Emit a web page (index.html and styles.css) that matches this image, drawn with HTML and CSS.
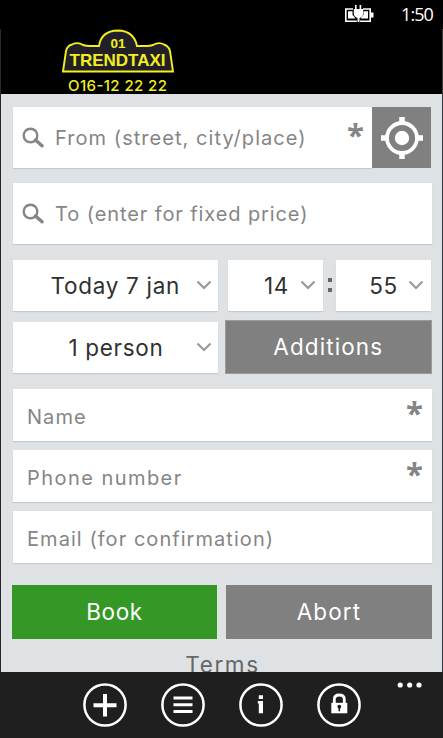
FILE: index.html
```html
<!DOCTYPE html>
<html lang="en">
<head>
<meta charset="utf-8">
<title>Trendtaxi</title>
<link rel="stylesheet" href="styles.css">
</head>
<body>
<div class="phone">
  <div class="status">
    <svg class="battery" width="31" height="19" viewBox="0 0 31 19">
      <path d="M9 5H1.8v12.2h11M19 5h7.2v12.2H16" fill="none" stroke="#fff" stroke-width="1.6"/>
      <path d="M4 7.200h4.500v3.500l3 3.800H4zM24 7.200h-4.500v3.500l-3 3.800H24zM27 8.500h2.500v5H27z" fill="#fff"/>
      <path d="M11 1h1.600v4h3V1h1.600v4h2v4.500q0 3-3.700 4.500v4h-2v-4q-3.700-1.500-3.700-4.500V5H11z" fill="#fff"/>
    </svg>
    <span class="clock">1:50</span>
  </div>
  <header class="brand">
    <svg class="logo" width="120" height="65" viewBox="0 0 120 65">
      <path d="M5 42.500L8 22q1-5 6-6.500 6-3 11 .5 3 1 7 1h9q2-15 19-15.500Q76 2 79 17h10q3 0 6-1 6-3.500 11-.5 5 2 6 6.500l3 20.500z" fill="#222026" stroke="#f2ef20" stroke-width="1.900"/>
      <text x="60" y="19.300" class="logo-number" textLength="15" lengthAdjust="spacingAndGlyphs">01</text>
      <text x="59.500" y="37" class="logo-name" textLength="96" lengthAdjust="spacingAndGlyphs">TRENDTAXI</text>
      <text x="59.500" y="61.500" class="logo-phone" textLength="99">O16-12 22 22</text>
    </svg>
  </header>
  <main class="form">
    <div class="from-row">
      <div class="field search">
        <svg class="lens" width="22" height="22" viewBox="0 0 22 22"><circle cx="8.500" cy="8.500" r="6.800" fill="none" stroke="#858585" stroke-width="2.400"/><path d="M13.500 13L20 18.800" stroke="#858585" stroke-width="3.400" stroke-linecap="round"/></svg>
        <span class="hint from-hint">From (street, city/place)</span>
        <span class="star">*</span>
      </div>
      <div class="locate">
        <svg width="42" height="42" viewBox="0 0 42 42"><circle cx="21" cy="21" r="15" fill="none" stroke="#fff" stroke-width="3.800"/><circle cx="21" cy="21" r="7.200" fill="#fff"/><path d="M21 0v7M21 35v7M0 21h7M35 21h7" stroke="#fff" stroke-width="5.500"/></svg>
      </div>
    </div>
    <div class="field search to">
      <svg class="lens" width="22" height="22" viewBox="0 0 22 22"><circle cx="8.500" cy="8.500" r="6.800" fill="none" stroke="#858585" stroke-width="2.400"/><path d="M13.500 13L20 18.800" stroke="#858585" stroke-width="3.400" stroke-linecap="round"/></svg>
      <span class="hint to-hint">To (enter for fixed price)</span>
    </div>
    <div class="time-row">
      <div class="select wide"><span class="today">Today 7 jan</span><svg class="chevron" width="16" height="11" viewBox="0 0 16 11"><path d="M1.500 1.500L8 8l6.500-6.500" fill="none" stroke="#999" stroke-width="2.200"/></svg></div>
      <div class="select hour"><span>14</span><svg class="chevron" width="16" height="11" viewBox="0 0 16 11"><path d="M1.500 1.500L8 8l6.500-6.500" fill="none" stroke="#999" stroke-width="2.200"/></svg></div>
      <span class="colon"><i></i><i></i></span>
      <div class="select minute"><span>55</span><svg class="chevron" width="16" height="11" viewBox="0 0 16 11"><path d="M1.500 1.500L8 8l6.500-6.500" fill="none" stroke="#999" stroke-width="2.200"/></svg></div>
    </div>
    <div class="people-row">
      <div class="select wide"><span class="person">1 person</span><svg class="chevron" width="16" height="11" viewBox="0 0 16 11"><path d="M1.500 1.500L8 8l6.500-6.500" fill="none" stroke="#999" stroke-width="2.200"/></svg></div>
      <div class="button additions">Additions</div>
    </div>
    <div class="contact">
      <div class="field"><span class="hint">Name</span><span class="star">*</span></div>
      <div class="field"><span class="hint phone-hint">Phone number</span><span class="star">*</span></div>
      <div class="field"><span class="hint">Email (for confirmation)</span></div>
    </div>
    <div class="actions">
      <div class="button book">Book</div>
      <div class="button abort">Abort</div>
    </div>
    <div class="terms">Terms</div>
  </main>
  <nav class="appbar">
    <svg width="44" height="44" viewBox="0 0 44 44"><circle cx="22" cy="22" r="20.600" class="ring"/><path d="M22 11v22.500M10.500 22.300h23" stroke="#fff" stroke-width="4"/></svg>
    <svg width="44" height="44" viewBox="0 0 44 44"><circle cx="22" cy="22" r="20.600" class="ring"/><path d="M12.500 15h19M12.500 21.800h19M12.500 28.500h19" stroke="#fff" stroke-width="3"/></svg>
    <svg width="44" height="44" viewBox="0 0 44 44"><circle cx="22" cy="22" r="20.600" class="ring"/><path d="M19.800 12.300h4.200v3.700h-4.200zM18.800 18H24v12.200h-4.200v-9.700h-1z" fill="#fff"/></svg>
    <svg width="44" height="44" viewBox="0 0 44 44"><circle cx="22" cy="22" r="20.600" class="ring"/><path d="M17.300 20v-3.500q0-4.500 5-4.500t5 4.500V20" fill="none" stroke="#fff" stroke-width="2.800"/><path d="M14.300 19.800h16v10.500h-16z" fill="#fff"/><circle cx="22.300" cy="23.700" r="1.900" fill="#1f1f1f"/><path d="M21.500 24h1.600v4.300h-1.600z" fill="#1f1f1f"/></svg>
    <svg class="more" width="26" height="6" viewBox="0 0 26 6"><circle cx="3.200" cy="3" r="2.600" fill="#fff"/><circle cx="12.700" cy="3" r="2.600" fill="#fff"/><circle cx="22" cy="3" r="2.600" fill="#fff"/></svg>
  </nav>
</div>
</body>
</html>
```
FILE: styles.css
```css
* { box-sizing: border-box; }
body { margin: 0; background: #000; font-family: Inter, sans-serif; }
.phone { width: 443px; height: 738px; display: flex; flex-direction: column; overflow: hidden; }
.status { height: 29px; display: flex; align-items: flex-start; justify-content: flex-end; padding: 4px 10px 0 0; }
.battery { margin-right: 26px; }
.clock { font: 18px/20px "Open Sans", sans-serif; color: #fff; width: 32px; letter-spacing: -0.9px; white-space: nowrap; }
.brand { height: 65px; border-left: 1px solid #2a2a2a; border-right: 1px solid #3a3a3a; padding-left: 57px; }
.logo { display: block; }
.logo text { text-anchor: middle; fill: #f2ef20; }
.logo-number { font: bold 13.500px "Liberation Sans", sans-serif; }
.logo-name { font: bold 17px "Liberation Sans", sans-serif; }
.logo-phone { font: 500 15px Inter, sans-serif; }

.form { height: 578px; overflow: hidden; background: #dfe2e5; border-left: 1px solid #242428; border-right: 1px solid #30363b; padding: 13px 10px 0 12px; }
.field { display: flex; align-items: center; height: 61px; background: #fff; box-shadow: 0 1px 1px #c6cacd; }
.hint { font-size: 20px; line-height: 24px; color: #858585; letter-spacing: 1.050px; white-space: nowrap; padding-top: 1px; }
.to-hint { letter-spacing: 0.900px; }
.phone-hint { letter-spacing: 1.450px; }
.star { margin-left: auto; padding-bottom: 6px; font: bold 31px/30px "Open Sans", sans-serif; color: #858585; }
.from-row { display: flex; width: 418px; }
.from-row .field { width: 359px; padding-right: 8px; }
.from-row .star { padding-bottom: 8px; }
.search { padding-left: 9px; }
.search .lens { margin-right: 11px; flex: none; }
.locate { width: 59px; height: 61px; display: flex; align-items: center; justify-content: center; background: #808080; }
.to { margin-top: 15px; width: 419px; }

.time-row { display: flex; margin-top: 16px; }
.select { display: flex; align-items: center; justify-content: flex-end; height: 51px; padding-right: 7px; background: #fff; box-shadow: 0 1px 1px #c6cacd; color: #303030; font-size: 22.500px; letter-spacing: 0.7px; white-space: nowrap; }
.select .chevron { flex: none; }
.wide { width: 205px; padding-right: 6px; }
.hour { width: 95px; margin-left: 10px; }
.minute { width: 95px; }
.today { margin-right: 16px; }
.person { margin-right: 32px; }
.hour span { margin-right: 11px; }
.minute span { margin-right: 10px; }
.colon { width: 13px; display: flex; flex-direction: column; align-items: center; gap: 6px; padding-top: 18px; }
.colon i { width: 4px; height: 4px; background: #666; }
.people-row { display: flex; margin-top: 9px; align-items: center; }
.button { display: flex; align-items: center; justify-content: center; height: 54px; padding-bottom: 1px; color: #fff; background: #808080; font-size: 22.500px; letter-spacing: 1.100px; }
.additions { width: 208px; margin-left: 7px; border: 1px solid #9b9b9b; }

.contact { display: flex; flex-direction: column; gap: 9px; margin-top: 15px; width: 419px; }
.contact .field { height: 52px; padding: 0 9px 0 14px; }
.contact .hint { padding-top: 4px; }
.actions { display: flex; gap: 9px; margin: 22px 0 0 -1px; }
.book { width: 205px; letter-spacing: 0.6px; background: #359726; }
.abort { width: 206px; }
.terms { margin-top: 12px; height: 30px; text-align: center; font-size: 22.500px; line-height: 28px; color: #666; letter-spacing: 1.600px; }

.appbar { position: relative; height: 66px; background: #1f1f1f; display: flex; gap: 34px; padding: 11px 0 0 83px; }
.ring { fill: none; stroke: #fff; stroke-width: 2.500; }
.more { position: absolute; right: 20px; top: 10px; }
```
